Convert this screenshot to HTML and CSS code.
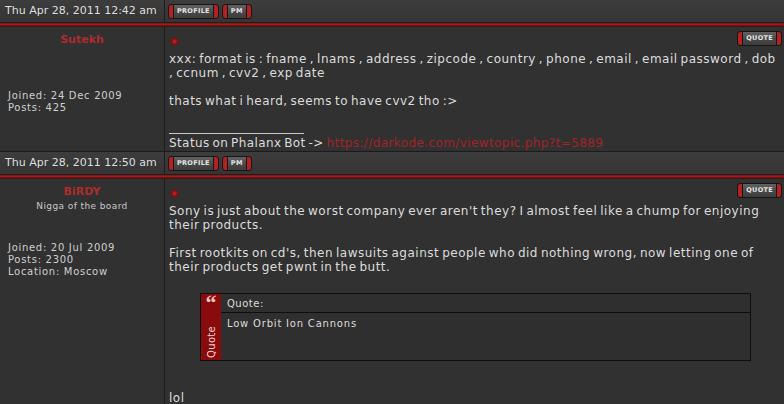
FILE: index.html
```html
<!DOCTYPE html>
<html lang="en">
<head>
    <meta charset="UTF-8">
    <title>Topic view</title>
    <link rel="stylesheet" href="styles.css">
</head>
<body>

<div class="topic">

    <div class="post post-short">
        <div class="post-head">
            <div class="post-date">Thu Apr 28, 2011 12:42 am</div>
            <div class="post-tools"><span class="btn">PROFILE</span><span class="btn">PM</span></div>
        </div>
        <div class="post-rule"></div>
        <div class="post-row">
            <div class="author">
                <div class="author-name">Sutekh</div>
                <div class="author-info">
                    Joined: 24 Dec 2009<br/>
                    Posts: 425
                </div>
            </div>
            <div class="post-main">
                <div class="post-top"><span class="dot"></span><span class="btn">QUOTE</span></div>
                <div class="post-text">
                    xxx: format is : fname , lnams , address , zipcode , country , phone , email , email password , dob<br/>
                    , ccnum , cvv2 , exp date<br/><br/>
                    thats what i heard, seems to have cvv2 tho :&gt;
                </div>
                <div class="sig">
                    Status on Phalanx Bot -&gt; <a href="#">https://darkode.com/viewtopic.php?t=5889</a>
                </div>
            </div>
        </div>
    </div>

    <div class="post">
        <div class="post-head">
            <div class="post-date">Thu Apr 28, 2011 12:50 am</div>
            <div class="post-tools"><span class="btn">PROFILE</span><span class="btn">PM</span></div>
        </div>
        <div class="post-rule"></div>
        <div class="post-row">
            <div class="author">
                <div class="author-name">BiRDY</div>
                <div class="author-rank">Nigga of the board</div>
                <div class="author-info">
                    Joined: 20 Jul 2009<br/>
                    Posts: 2300<br/>
                    Location: Moscow
                </div>
            </div>
            <div class="post-main">
                <div class="post-top"><span class="dot"></span><span class="btn">QUOTE</span></div>
                <div class="post-text">
                    Sony is just about the worst company ever aren't they? I almost feel like a chump for enjoying<br/>
                    their products.<br/><br/>
                    First rootkits on cd's, then lawsuits against people who did nothing wrong, now letting one of<br/>
                    their products get pwnt in the butt.
                </div>
                <div class="quote">
                    <div class="quote-side">
                        <span class="quote-mark">&ldquo;</span>
                        <span class="quote-label">Quote</span>
                    </div>
                    <div class="quote-box">
                        <div class="quote-head">Quote:</div>
                        <div class="quote-body">Low Orbit Ion Cannons</div>
                    </div>
                </div>
                <div class="post-text post-after">lol</div>
            </div>
        </div>
    </div>

</div>

</body>
</html>
```

FILE: styles.css
```css
body { margin: 0; background-color: #313131; font-family: "DejaVu Sans", sans-serif; overflow: hidden; }
a:link, a:visited { color: #a32424; text-decoration: none; }

.post-head { display: grid; grid-template-columns: 165px 1fr; height: 22px; background: linear-gradient(#3d3d3d, #343434); }
.post-date { color: #dedede; font-size: 11px; line-height: 22px; padding-left: 5px; border-right: 1px solid #1c1c1c; }
.post-tools { display: flex; align-items: center; gap: 5px; padding: 1px 0 0 4px; }

.post-rule { height: 5px; background: linear-gradient(#1e1e1e 0 1px, #5c0e0e 1px, #b01c1c 2px, #9a1616 3px, #4a0c0c 4px, #262626 5px); }

.post-row { display: grid; grid-template-columns: 165px 1fr; border-bottom: 1px solid #1b1b1b; }
.post-short .post-row { height: 124px; overflow: hidden; }

.author { border-right: 1px solid #1c1c1c; padding-top: 6px; }
.author-name { color: #ad2c2c; font-size: 11px; font-weight: bold; text-align: center; line-height: 14px; }
.author-rank { color: #c8c8c8; font-size: 9px; letter-spacing: 0.4px; text-align: center; line-height: 14px; }
.author-info { color: #cfcfcf; font-size: 10px; letter-spacing: 0.7px; line-height: 12px; margin-top: 43px; padding-left: 8px; }
.post .author-rank + .author-info { margin-top: 29px; }

.post-main { padding: 5px 3px 0 4px; min-width: 0; }
.post-top { display: flex; justify-content: space-between; align-items: flex-start; height: 13px; }
.dot { width: 7px; height: 7px; margin: 6px 0 0 2px; border-radius: 50%; background: radial-gradient(circle, #c82828 0, #8a1010 55%, #4a1212 100%); box-shadow: 0 0 2px #6a1515; }
.post-text { color: #dcdcdc; font-size: 12px; line-height: 14px; letter-spacing: 0.5px; word-spacing: -1.4px; white-space: nowrap; margin-top: 7px; }

.sig { margin-top: 25px; padding-top: 2px; border-top: 1px solid #c8c8c8; width: 135px; white-space: nowrap; color: #dcdcdc; font-size: 12px; line-height: 14px; letter-spacing: 0.4px; word-spacing: -1.4px; }

.btn { display: inline-block; height: 13px; padding: 0 8px; border-radius: 3px; color: #e4e4e4; font-size: 6.5px; font-weight: bold; line-height: 13px; letter-spacing: 0.3px; box-shadow: 0 0 0 1px #161616;
    background: linear-gradient(to right, #b52020 0 4px, #151515 4px 5px, transparent 5px calc(100% - 5px), #151515 calc(100% - 5px) calc(100% - 4px), #b52020 calc(100% - 4px)), linear-gradient(#626262, #474747 60%, #3c3c3c); }

.quote { display: flex; margin: 19px 30px 0 31px; height: 66px; border: 1px solid #0e0e0e; }
.quote-side { width: 20px; background-color: #8a0b0b; display: flex; flex-direction: column; align-items: center; justify-content: space-between; padding-bottom: 2px; }
.quote-mark { color: #f0c4c4; font-family: "Liberation Serif", serif; font-weight: bold; font-size: 22px; line-height: 16px; height: 12px; margin-top: 1px; }
.quote-label { color: #f2d2d2; font-size: 10px; writing-mode: vertical-rl; transform: rotate(180deg); letter-spacing: 0.3px; }
.quote-box { flex: 1; background-color: #2f2f2f; }
.quote-head { height: 18px; border-bottom: 1px solid #0e0e0e; color: #dcdcdc; font-size: 10px; letter-spacing: 0.5px; line-height: 19px; padding-left: 6px; }
.quote-body { color: #dcdcdc; font-size: 10px; letter-spacing: 0.8px; line-height: 12px; padding: 5px 0 0 6px; }

.post-after { margin-top: 30px; }
```
